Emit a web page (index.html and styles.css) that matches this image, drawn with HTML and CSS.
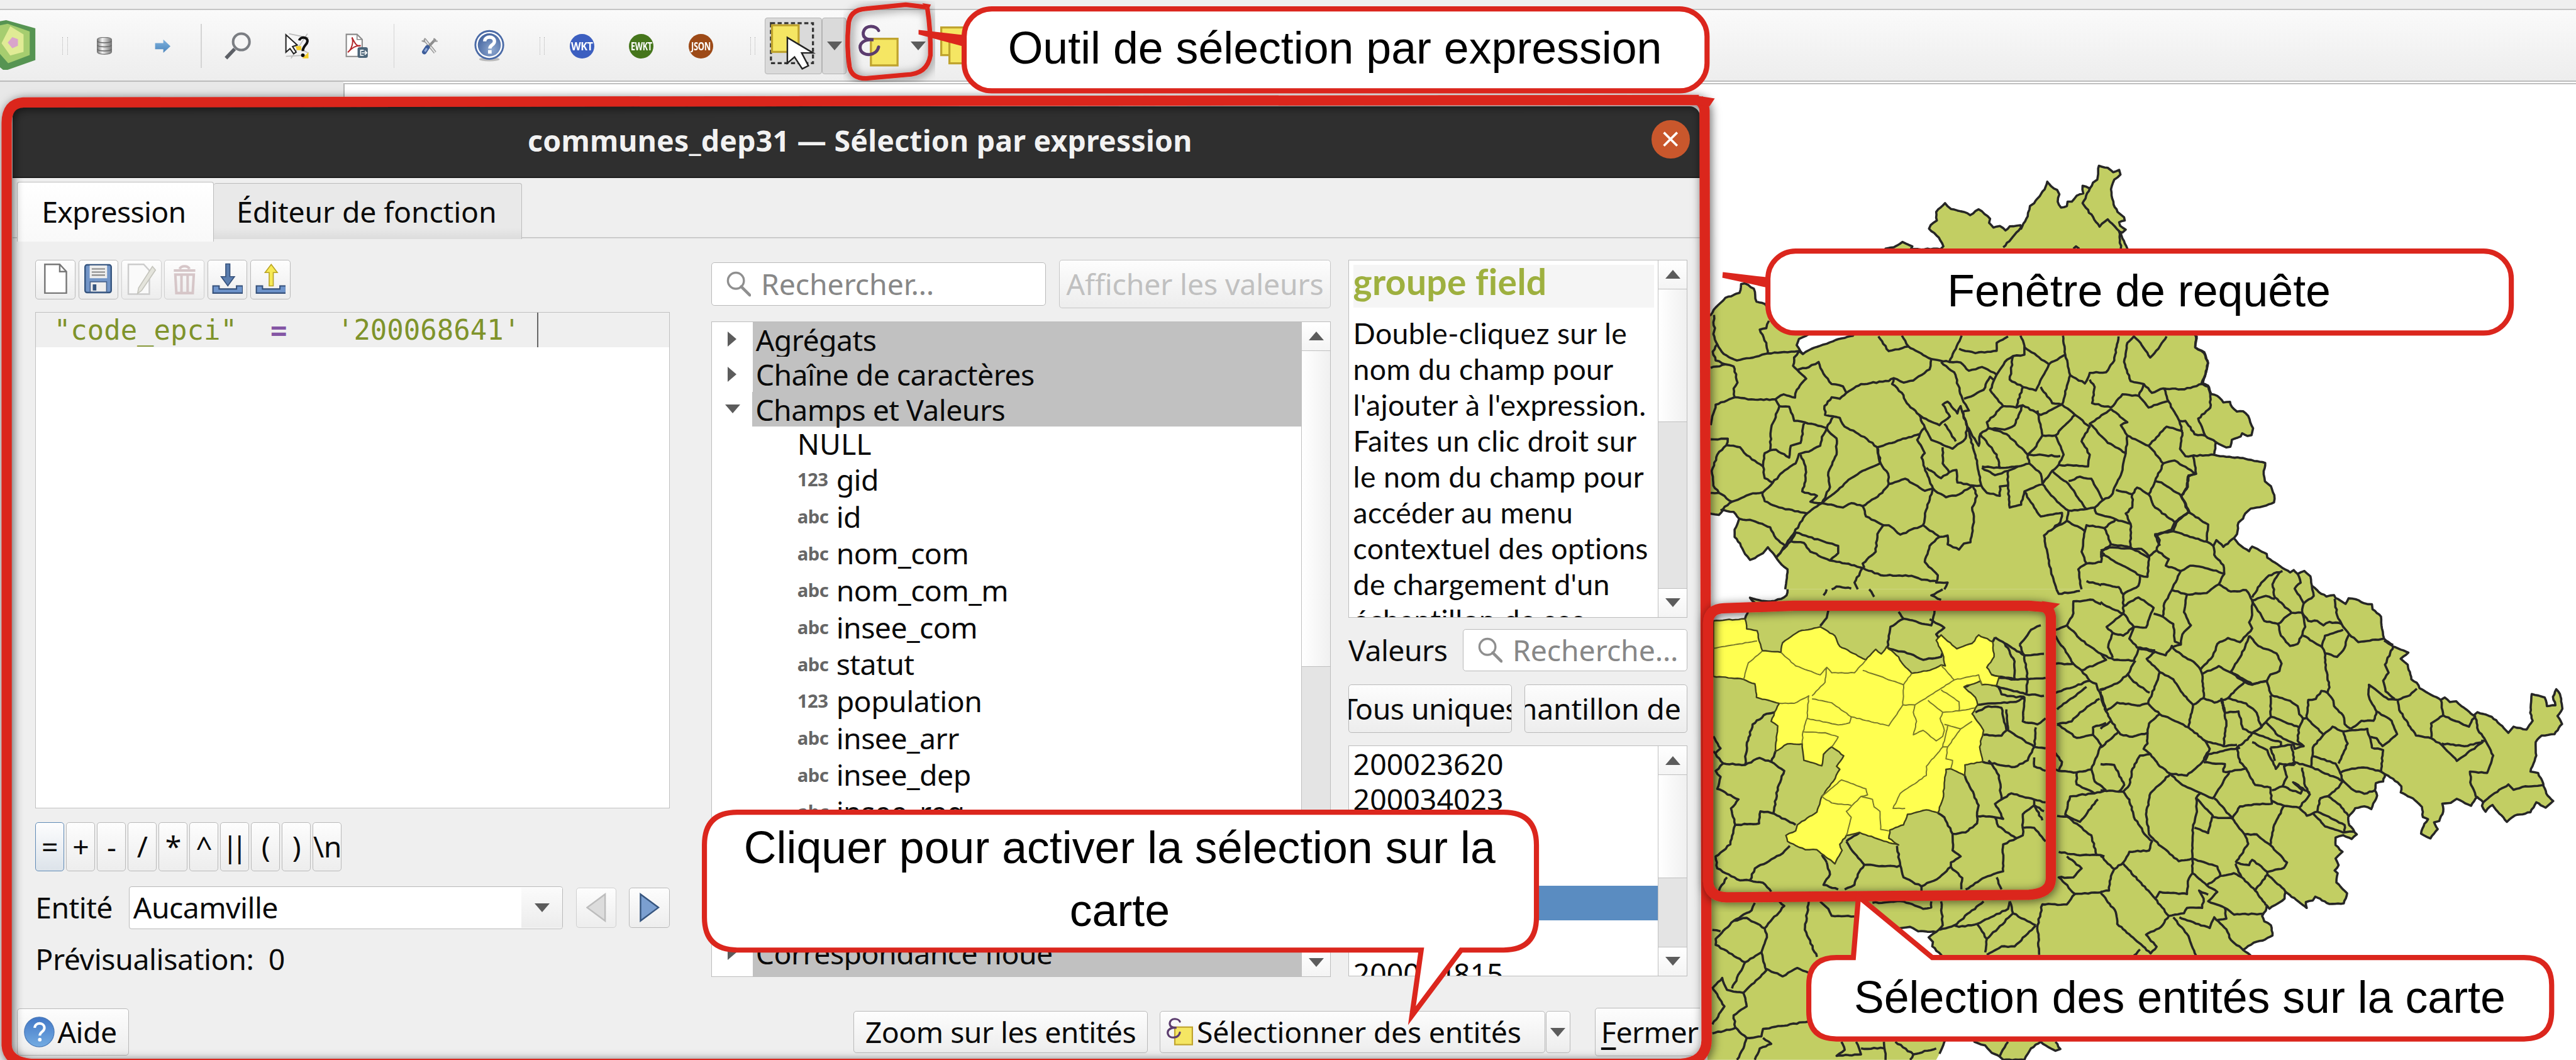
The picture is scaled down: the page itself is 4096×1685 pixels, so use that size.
FILE: index.html
```
<!DOCTYPE html>
<html lang="fr">
<head>
<meta charset="utf-8">
<title>Sélection par expression</title>
<link rel="stylesheet" href="styles.css">
</head>
<body>
<svg class="defs" aria-hidden="true">
  <defs>
    <linearGradient id="steel" x1="0" x2="1"><stop offset="0" stop-color="#777"/><stop offset=".35" stop-color="#f4f4f4"/><stop offset="1" stop-color="#777"/></linearGradient>
    <linearGradient id="sky" x1="0" y1="0" x2="0" y2="1"><stop offset="0" stop-color="#4277c6"/><stop offset="1" stop-color="#74ace2"/></linearGradient>
    <linearGradient id="arrowblue" x1="0" y1="0" x2="0" y2="1"><stop offset="0" stop-color="#7fb2de"/><stop offset="1" stop-color="#4c86bd"/></linearGradient>
    <radialGradient id="navy" cx=".6" cy=".7" r=".8"><stop offset="0" stop-color="#8fa9d0"/><stop offset="1" stop-color="#3b5c9a"/></radialGradient>
    <filter id="shade" x="-5%" y="-5%" width="110%" height="110%"><feDropShadow dx="3" dy="3" stdDeviation="9" flood-color="#000" flood-opacity=".6"/></filter>
    <symbol id="glass" viewBox="0 0 48 48"><circle cx="19" cy="18" r="15" fill="none" stroke="#8f8f8f" stroke-width="4"/><path d="M29 29 45 45" stroke="#8f8f8f" stroke-width="5.5" stroke-linecap="round"/></symbol>
    <symbol id="eps" viewBox="0 0 85 86"><rect x="28" y="29" width="52" height="52" fill="#f5e663" stroke="#bfa32e" stroke-width="4"/><path d="M43 13C40 4 17 -1 13 17c-1 11 8 14 20 14C16 29 3 38 8 51c5 13 31 12 35-6" fill="none" stroke="#5b3c6e" stroke-width="6" stroke-linecap="round"/></symbol>
  </defs>
</svg>
<div class="desktop">
  <div class="menubar"></div>
  <div class="toolbar">
    <svg class="t-logo" width="72" height="100" viewBox="0 0 72 100"><path d="M0 2 12 0 69 16V78L15 97H6L0 92Z" fill="#569452"/><path d="M0 10 15 7 58 22V68L16 84 0 66Z" fill="#a6cd6f"/><path d="M3 45 20 12 46 28V62L20 69Z" fill="#e0eb95"/><path d="M15 44 24 33 35 37V50L24 55Z" fill="#d9a4cb"/></svg>
    <i class="grip m50"></i>
    <svg class="m56" width="32" height="34" viewBox="0 0 32 34"><path d="M2 5c0-6 28-6 28 0v24c0 6-28 6-28 0Z" fill="url(#steel)" stroke="#777" stroke-width="1.5"/><path d="M2 8c4 4 24 4 28 0M2 16c4 4 24 4 28 0M2 24c4 4 24 4 28 0" fill="none" stroke="#666" stroke-width="2"/></svg>
    <svg class="m81" width="34" height="28" viewBox="0 0 34 28"><path d="M2 8H18V1L32 14 18 27V20H2Z" fill="url(#arrowblue)"/></svg>
    <i class="sep m57"></i>
    <svg class="m43" width="54" height="54" viewBox="0 0 54 54"><circle cx="34" cy="19" r="16" fill="#f6f6f6" stroke="#7b7e83" stroke-width="5"/><path d="M21 33 4 51" stroke="#5d6066" stroke-width="7"/></svg>
    <svg class="m65" width="50" height="52" viewBox="0 0 50 52"><path d="M8 2 46 10M44 2 12 50M2 46 40 44M10 20 46 40" stroke="#bbb" stroke-width="2" fill="none"/><path d="M20 26H32V34H24ZM34 50 46 38V50Z" fill="#f5cf2c"/><path d="M2 4V38L10 31 17 41 22 38 15 27 24 24Z" fill="#fff" stroke="#222" stroke-width="2.5"/><path d="M28 15c2-8 17-7 16 2-1 7-9 9-9 19" fill="none" stroke="#111" stroke-width="5"/><circle cx="35" cy="44" r="3.5"/></svg>
    <svg class="m68" width="46" height="50" viewBox="0 0 46 50"><path d="M2 2H23L33 12V45H2Z" fill="#fff" stroke="#8a8a8a" stroke-width="2.5"/><path d="M23 2V12H33" fill="none" stroke="#8a8a8a" stroke-width="2"/><path d="M5 37C12 32 17 17 13 8c6 12 10 19 17 16-10-1-17 4-25 13Z" fill="none" stroke="#b3282c" stroke-width="2.5"/><rect x="24" y="27" width="20" height="21" rx="4" fill="#4b6478"/><path d="M36 33H30V43H36M32 38H41M38 34 42 38 38 42" fill="none" stroke="#fff" stroke-width="2"/></svg>
    <i class="sep m48"></i>
    <svg class="m51" width="34" height="34" viewBox="0 0 34 34"><path d="M7 4 28 30" stroke="#8d8d8d" stroke-width="6"/><path d="M7 4 28 30" stroke="#e4e4e4" stroke-width="3"/><path d="M29 4 13 21" stroke="#8d8d8d" stroke-width="5"/><path d="M13 20 7 29" stroke="#3d5d9a" stroke-width="9" stroke-linecap="round"/><path d="M12 22 8 28" stroke="#8fa9d8" stroke-width="4"/><path d="M26 2V8H33M2 7 7 9 8 2" fill="none" stroke="#999" stroke-width="2.5"/></svg>
    <svg class="m68" width="64" height="64" viewBox="0 0 64 64"><ellipse cx="32" cy="58" rx="20" ry="4" fill="#bbb"/><circle cx="32" cy="30" r="29" fill="#4a6aa6"/><circle cx="32" cy="30" r="25.5" fill="#fff"/><circle cx="32" cy="30" r="22.5" fill="url(#navy)"/><path d="M23 23c0-11 19-11 19 0 0 7-9 7-9 14" fill="none" stroke="#fff" stroke-width="6.5"/><rect x="29.5" y="40" width="7" height="7" fill="#fff"/></svg>
    <i class="grip m66"></i>
    <span class="badge wkt m49"><span>WKT</span></span><span class="badge ewkt m68"><span>EWKT</span></span><span class="badge json m68"><span>JSON</span></span>
    <i class="grip m73"></i>
    <span class="tbtn m18"><svg width="100" height="100" viewBox="0 0 100 100"><rect x="6" y="6" width="82" height="78" fill="none" stroke="#333" stroke-width="4" stroke-dasharray="8 5"/><rect x="8" y="10" width="52" height="52" fill="#f5e663" stroke="#bfa32e" stroke-width="4"/><path d="M38 34V84L52 72 67 95 79 89 66 64H88Z" fill="#fff" stroke="#222" stroke-width="3"/></svg></span>
    <span class="tdrop"><i class="down"></i></span>
    <svg class="m19" width="85" height="86"><use href="#eps"/></svg>
    <i class="down m21"></i>
    <svg class="m28" width="80" height="76" viewBox="0 0 80 76"><rect x="2" y="2" width="50" height="54" fill="#f5e663" stroke="#bfa32e" stroke-width="4"/><rect x="18" y="18" width="50" height="54" fill="#f5e663" stroke="#bfa32e" stroke-width="4"/></svg>
  </div>
  <div class="workspace">
    <div class="dock"></div>
    <div class="canvas"></div>
  </div>
  <svg class="map" id="map" width="5028" height="2068" viewBox="0 0 5028 2068"></svg>

  <div class="dialog">
    <div class="titlebar"><span>communes_dep31 — Sélection par expression</span><i class="close"><svg width="30" height="30" viewBox="0 0 30 30"><path d="M2 2 28 28M28 2 2 28" stroke="#fff" stroke-width="4.5"/></svg></i></div>
    <div class="tabs"><span class="tab on">Expression</span><span class="tab">Éditeur de fonction</span></div>
    <div class="columns">
      <div class="left">
        <div class="tools">
          <span class="btn"><svg width="60" height="66" viewBox="0 0 60 66"><path d="M9 4H38L51 18V60H9Z" fill="#fff" stroke="#777" stroke-width="3"/><path d="M38 4V18H51" fill="none" stroke="#777" stroke-width="3"/></svg></span>
          <span class="btn"><svg width="60" height="66" viewBox="0 0 60 66"><rect x="4" y="5" width="51" height="54" rx="4" fill="#7396c8" stroke="#36557f" stroke-width="3"/><rect x="13" y="6" width="34" height="25" fill="#eee"/><path d="M17 13H43M17 19H43M17 25H43" stroke="#888" stroke-width="2.5"/><rect x="14" y="38" width="32" height="20" fill="#eee" stroke="#46628c" stroke-width="2"/><rect x="19" y="43" width="7" height="12" fill="#36557f"/></svg></span>
          <span class="btn dim"><svg width="60" height="66" viewBox="0 0 60 66"><path d="M5 4H35L46 16V62H5Z" fill="#fafafa" stroke="#ccc" stroke-width="3"/><path d="M25 50 52 8 58 15 31 55 23 61Z" fill="#e4e4dc" stroke="#c4c4bc" stroke-width="2"/></svg></span>
          <span class="btn dim"><svg width="60" height="66" viewBox="0 0 60 66"><path d="M9 16H51M21 13C22 6 38 6 39 13" fill="none" stroke="#d6c6c8" stroke-width="5"/><path d="M12 24H48L46 60H14ZM24 24V60M36 24V60" fill="none" stroke="#d6c6c8" stroke-width="5"/></svg></span>
          <span class="btn"><svg width="60" height="66" viewBox="0 0 60 66"><path d="M27 3H35V28H44L31 46 18 28H27Z" fill="#5a7dae" stroke="#35507a" stroke-width="2"/><path d="M2 46H14V52H48V46H60V60H2Z" fill="#6f95cc" stroke="#35507a" stroke-width="2.5"/></svg></span>
          <span class="btn"><svg width="60" height="66" viewBox="0 0 60 66"><path d="M27 46H35V20H43L31 4 19 20H27Z" fill="#f7ea55" stroke="#b9a426" stroke-width="2"/><path d="M2 46H14V52H48V46H60V60H2Z" fill="#6f95cc" stroke="#35507a" stroke-width="2.5"/></svg></span>
        </div>
        <div class="editor"><div class="codeline"><pre>"code_epci"  <b>=</b>   '200068641' </pre><i class="caret"></i></div></div>
        <div class="ops"><span class="btn hot">=</span><span class="btn">+</span><span class="btn">-</span><span class="btn">/</span><span class="btn">*</span><span class="btn">^</span><span class="btn bars">||</span><span class="btn">(</span><span class="btn">)</span><span class="btn">\n</span></div>
        <div class="entity"><label>Entité</label><span class="combo"><span>Aucamville</span><i class="cell"><i class="down"></i></i></span>
          <span class="btn nav dim"><svg width="40" height="58" viewBox="0 0 40 58"><path d="M37 3V55L2 29Z" fill="#dcdcdc" stroke="#bdbdbd" stroke-width="3"/></svg></span><span class="btn nav"><svg width="40" height="58" viewBox="0 0 40 58"><path d="M3 3V55L38 29Z" fill="#7b9fd0" stroke="#36557f" stroke-width="3"/></svg></span></div>
        <div class="preview">Prévisualisation: <span>0</span></div>
      </div>
      <div class="middle">
        <div class="searchrow"><span class="field"><svg width="50" height="50"><use href="#glass"/></svg>Rechercher…</span><span class="btn off">Afficher les valeurs</span></div>
        <div class="list tree">
          <div class="rows">
            <div class="group"><i class="right"></i><span>Agrégats</span></div>
            <div class="group"><i class="right"></i><span>Chaîne de caractères</span></div>
            <div class="group"><i class="down"></i><span>Champs et Valeurs</span></div>
            <div class="item null">NULL</div>
            <div class="item"><b>123</b>gid</div>
            <div class="item"><b>abc</b>id</div>
            <div class="item"><b>abc</b>nom_com</div>
            <div class="item"><b>abc</b>nom_com_m</div>
            <div class="item"><b>abc</b>insee_com</div>
            <div class="item"><b>abc</b>statut</div>
            <div class="item"><b>123</b>population</div>
            <div class="item"><b>abc</b>insee_arr</div>
            <div class="item"><b>abc</b>insee_dep</div>
            <div class="item"><b>abc</b>insee_reg</div>
            <div class="spacer"></div>
            <div class="group"><i class="right"></i><span>Correspondance floue</span></div>
            <div class="group next"><span></span></div>
          </div>
          <div class="scroll"><i class="end"><i class="up"></i></i><i class="thumb t1"></i><i class="groove"></i><i class="end"><i class="down"></i></i></div>
        </div>
      </div>
      <div class="right-col">
        <div class="list doc">
          <div class="text"><h3>groupe field</h3><p>Double-cliquez sur le<br>nom du champ pour<br>l'ajouter à l'expression.<br>Faites un clic droit sur<br>le nom du champ pour<br>accéder au menu<br>contextuel des options<br>de chargement d'un<br>échantillon de ses</p></div>
          <div class="scroll"><i class="end"><i class="up"></i></i><i class="thumb t2"></i><i class="groove"></i><i class="end"><i class="down"></i></i></div>
        </div>
        <div class="values"><label>Valeurs</label><span class="field"><svg width="50" height="50"><use href="#glass"/></svg>Recherche…</span></div>
        <div class="pair"><span class="btn"><span>Tous uniques</span></span><span class="btn end-cut"><span>hantillon de</span></span></div>
        <div class="list vals">
          <div class="rows"><div>200023620</div><div>200034023</div><div></div><div></div><div class="sel"></div><div></div><div>200054815</div></div>
          <div class="scroll"><i class="end"><i class="up"></i></i><i class="thumb t3"></i><i class="groove"></i><i class="end"><i class="down"></i></i></div>
        </div>
      </div>
    </div>
    <div class="footer">
      <span class="btn help"><svg width="60" height="60" viewBox="0 0 60 60"><circle cx="30" cy="30" r="29" fill="url(#sky)" stroke="#4a7ab8" stroke-width="1.5"/><path d="M21 22c1-12 19-11 19 0 0 8-9 7-9 15" fill="none" stroke="#fff" stroke-width="5"/><circle cx="31" cy="45" r="3.5" fill="#fff"/></svg>Aide</span>
      <span class="btn zoomb">Zoom sur les entités</span>
      <span class="btn selb"><svg width="56" height="57"><use href="#eps"/></svg>Sélectionner des entités</span>
      <span class="btn more"><i class="down"></i></span>
      <span class="btn closeb"><u>F</u>ermer</span>
    </div>
  </div>

  <svg class="frames" width="5028" height="2068" viewBox="0 0 5028 2068">
    <g fill="none" stroke="#db261d" stroke-linejoin="round">
      <path filter="url(#shade)" stroke-width="20" d="M3316 195 1800 197 45 200Q13 202 13 240V2040Q15 2072 60 2076H3280Q3330 2072 3331 2030L3327 215Q3327 205 3316 195"/>
      <path filter="url(#shade)" stroke-width="9" d="M1808 14 1768 9 1690 17Q1657 19 1656 50 1652 90 1658 130 1662 153 1690 153L1768 146Q1810 145 1816 108 1817 60 1810 16"/>
      <path filter="url(#shade)" stroke-width="20" d="M3995 1185 3960 1182H3500L3365 1187Q3335 1188 3334 1215V1720Q3336 1750 3370 1751L3960 1746Q4002 1744 4003 1715V1205Q4002 1190 3990 1185"/>
    </g>
    <path fill="#db261d" d="M3300 185 3347 192 3337 207 3310 205ZM1800 6 1817 9 1812 20ZM3985 1173 4021 1178 4003 1192Z"/>
  </svg>

  <div class="callout c1"><svg><path class="spike" d="M-84 46 2 56V78L-84 55Z"/><rect x="5" y="5" width="1450" height="160" rx="54"/></svg><p>Outil de sélection par expression</p></div>
  <div class="callout c2"><svg><path class="spike" d="M-83 46 2 56V76L-84 57Z"/><rect x="5" y="5" width="1451" height="160" rx="54"/></svg><p>Fenêtre de requête</p></div>
  <div class="callout c3"><svg><path d="M69 5H1565Q1629 5 1629 69V210Q1629 274 1565 274H1482L1386 402 1404 274H69Q5 274 5 210V69Q5 5 69 5Z"/></svg><p>Cliquer pour activer la sélection sur la<br>carte</p></div>
  <div class="callout c4"><svg><path d="M59 5H92L102 -114 246 5H1401Q1455 5 1455 59V110Q1455 164 1401 164H59Q5 164 5 110V59Q5 5 59 5Z"/></svg><p>Sélection des entités sur la carte</p></div>
</div>
<script src="map.js"></script>
</body>
</html>
```
FILE: styles.css
```
* { box-sizing: border-box; }
html, body { margin: 0; padding: 0; overflow: hidden; background: #fff; }
.defs { position: absolute; width: 0; height: 0; }
.desktop {
  zoom: .81464; position: relative; width: 5028px; height: 2070px; overflow: hidden;
  display: flex; flex-direction: column;
  font: 57px/1.2 "Noto Sans", sans-serif; letter-spacing: -.7px; color: #0a0a0a; white-space: nowrap;
}
.menubar { height: 20px; background: #efefef; border-bottom: 3px solid #c4c4c4; flex: none; }
.toolbar { height: 140px; flex: none; display: flex; align-items: center; padding-top: 2px; background: linear-gradient(#fafafa, #ededed); border-bottom: 3px solid #bcbcbc; }
.toolbar > * { flex: none; }
.m18 { margin-left: 18px; } .m19 { margin-left: 19px; } .m21 { margin-left: 21px; } .m28 { margin-left: 28px; }
.m43 { margin-left: 43px; } .m48 { margin-left: 48px; } .m49 { margin-left: 49px; } .m50 { margin-left: 50px; }
.m51 { margin-left: 51px; } .m56 { margin-left: 56px; } .m57 { margin-left: 57px; } .m65 { margin-left: 65px; }
.m66 { margin-left: 66px; } .m68 { margin-left: 68px; } .m73 { margin-left: 73px; } .m81 { margin-left: 81px; }
.grip { width: 10px; height: 34px; border-left: 2px dotted #b5b5b5; border-right: 2px dotted #b5b5b5; }
.sep { width: 2px; height: 86px; background: #d4d4d4; }
.badge { width: 48px; height: 48px; border-radius: 50%; color: #fff; font: bold 21px/48px "Open Sans", sans-serif; letter-spacing: -.5px; display: flex; justify-content: center; }
.badge span { transform: scaleX(.95); }
.wkt { background: #3c5fc0; } .ewkt { background: #46761c; } .json { background: #9d4a17; }
.ewkt span { transform: scaleX(.74); } .json span { transform: scaleX(.76); }
.tbtn, .tdrop { height: 110px; border: 2px solid #b4b4b4; border-radius: 5px; background: #dadada; display: flex; align-items: center; justify-content: center; }
.tbtn { width: 112px; } .tdrop { width: 48px; }
.down, .up, .right { display: block; width: 0; height: 0; border: 15px solid transparent; flex: none; }
.down { border-top: 18px solid #5c5c5c; border-bottom: 0; }
.up { border-bottom: 18px solid #5c5c5c; border-top: 0; }
.right { border-left: 18px solid #5c5c5c; border-right: 0; }
.workspace { flex: 1; display: flex; }
.dock { width: 670px; background: #e8e8e8; }
.canvas { flex: 1; background: #fff; border-top: 3px solid #c0c0c0; border-left: 3px solid #b5b5b5; margin-top: 2px; }
.map { position: absolute; left: 0; top: 0; }
.frames { position: absolute; left: 0; top: 0; }

.dialog { position: absolute; left: 24px; top: 207px; width: 3294px; height: 1861px; background: #efefef; border-radius: 20px 20px 0 0; overflow: hidden; display: flex; flex-direction: column; }
.titlebar { height: 141px; flex: none; background: #2f2f2f; border-bottom: 3px solid #1d1d1d; color: #f2f2f2; font-weight: bold; letter-spacing: .25px; display: flex; align-items: center; padding: 0 20px 3px 1006px; justify-content: space-between; }
.close { width: 74px; height: 74px; border-radius: 50%; background: #c9572c; display: flex; align-items: center; justify-content: center; margin-top: -6px; }
.tabs { height: 119px; flex: none; display: flex; align-items: flex-end; padding-left: 9px; background: linear-gradient(#c4c4c4, #c4c4c4) 0 115px / 100% 2px no-repeat; }
.tab { height: 109px; width: 602px; background: linear-gradient(#e9e9e9 80%, #dcdcdc); border: 2px solid #bcbcbc; border-bottom: 0; border-left: 0; border-radius: 5px 5px 0 0; display: flex; align-items: center; justify-content: center; letter-spacing: -.2px; padding: 2px 4px 0 0; }
.tab.on { width: 384px; height: 116px; background: linear-gradient(#fff, #f9f9f9); border-left: 2px solid #bcbcbc; margin-bottom: -4px; letter-spacing: -.9px; padding: 0 6px 0 0; }
.tabs .tab:last-child { margin-bottom: 1px; }
.columns { display: flex; margin: 40px 0 0 45px; height: 1400px; }
.left { width: 1238px; display: flex; flex-direction: column; }
.middle { width: 1210px; margin-left: 81px; display: flex; flex-direction: column; }
.right-col { width: 662px; margin-left: 34px; display: flex; flex-direction: column; }
.btn { border: 2px solid #b9b9b9; border-radius: 6px; background: linear-gradient(#fdfdfd, #ededed); display: flex; align-items: center; justify-content: center; flex: none; overflow: hidden; }
.btn.dim { border-color: #cfcfcf; }
.btn.off { color: #c0c0c0; border-color: #c6c6c6; width: 531px; height: 95px; letter-spacing: -.2px; }
.tools { display: flex; gap: 6px; height: 77px; }
.tools .btn { width: 78px; }
.editor { margin-top: 25px; height: 971px; background: #fff; border: 2px solid #c0c0c0; }
.codeline { height: 68px; background: #efefef; display: flex; align-items: center; padding-left: 35px; }
.codeline pre { margin: 0; font: 54px/68px "DejaVu Sans Mono", monospace; letter-spacing: 0; color: #7f932b; }
.codeline b { font-weight: bold; color: #8456a4; }
.caret { width: 2px; height: 68px; background: #666; margin-left: 1px; }
.ops { margin-top: 26px; display: flex; gap: 4px; }
.ops .btn { width: 56.2px; height: 96px; }
.ops .hot { border-color: #5f8ab6; background: linear-gradient(#fdfdfe, #dce3ea); }
.ops .bars { letter-spacing: -13px; padding-right: 13px; }
.entity { margin-top: 30px; height: 83px; display: flex; align-items: center; }
.entity label { width: 183px; }
.combo { width: 848px; height: 83px; border: 2px solid #b9b9b9; border-radius: 5px; background: #fff; display: flex; align-items: center; justify-content: space-between; padding-left: 7px; }
.cell { width: 80px; height: 79px; background: linear-gradient(#fbfbfb, #ececec); display: flex; align-items: center; justify-content: center; }
.nav { width: 79px; height: 78px; margin-left: 25px; }
.preview { margin-top: 24px; line-height: 70px; letter-spacing: -.5px; }
.preview span { margin-left: 14px; }
.searchrow { display: flex; align-items: center; justify-content: space-between; height: 95px; }
.field { background: #fff; border: 2px solid #b9b9b9; border-radius: 6px; display: flex; align-items: center; color: #878787; overflow: hidden; letter-spacing: -.1px; }
.searchrow .field { width: 654px; height: 84px; padding-left: 27px; gap: 19px; }
.list { background: #fff; border: 2px solid #bdbdbd; display: flex; overflow: hidden; }
.scroll { width: 57px; flex: none; border-left: 2px solid #c0c0c0; display: flex; flex-direction: column; }
.end { height: 55px; flex: none; background: linear-gradient(#fff, #f4f4f4); display: flex; align-items: center; justify-content: center; }
.thumb { background: linear-gradient(90deg, #fff, #f0f0f0); border: solid #c0c0c0; border-width: 2px 0; }
.t1 { height: 618px; } .t2 { height: 260px; } .t3 { height: 203px; }
.groove { flex: 1; background: #e4e4e4; border-bottom: 2px solid #c0c0c0; }
.tree { margin-top: 25px; height: 1280px; }
.rows { flex: 1; overflow: hidden; }
.tree .rows { display: flex; flex-direction: column; }
.group { height: 68px; flex: none; display: flex; align-items: center; padding-left: 31px; }
.group .right { width: 18px; margin-right: 31px; }
.group .down { margin-left: -5px; margin-right: 24px; }
.group span { flex: 1; height: 68px; line-height: 69px; padding-left: 6px; background: #c1c1c1; }
.group.next { padding-left: 80px; }
.item { height: 72px; flex: none; display: flex; align-items: center; padding-left: 167px; padding-top: 1px; }
.item.null { height: 68px; letter-spacing: 0; }
.item b { width: 76px; font-size: 36px; color: #666; letter-spacing: -.6px; }
.spacer { height: 205px; margin-top: 0; flex: none; }
.doc { height: 698px; flex: none; }
.doc .text { flex: 1; padding: 8px 7px 0 8px; overflow: hidden; font-family: Lato, sans-serif; letter-spacing: .4px; }
.doc h3 { margin: 0 0 15px; height: 84px; line-height: 66px; font-size: 70px; color: #9eb03f; background: #f5f5f5; }
.doc p { margin: 0; font-size: 57px; line-height: 70px; }
.values { margin-top: 23px; height: 82px; flex: none; display: flex; align-items: center; justify-content: space-between; }
.values .field { width: 439px; height: 82px; padding-left: 27px; gap: 19px; }
.pair { margin-top: 26px; display: flex; justify-content: space-between; }
.pair .btn { width: 319px; height: 94px; }
.end-cut.btn { justify-content: flex-end; padding-right: 12px; letter-spacing: -.3px; }
.vals { margin-top: 25px; height: 450px; flex: none; letter-spacing: 0; }
.vals .rows div { height: 68px; line-height: 70px; padding-left: 8px; }
.vals .rows .sel { background: #5a8cc1; }
.footer { display: flex; align-items: center; height: 96px; margin: 59px 0 0 9px; }
.help { width: 219px; height: 92px; gap: 5px; padding-right: 10px; }
.zoomb { width: 574px; height: 82px; margin-left: 1414px; }
.selb { width: 752px; height: 82px; margin-left: 24px; gap: 5px; justify-content: flex-start; padding-left: 10px; letter-spacing: -.3px; }
.more { width: 48px; height: 82px; margin-left: 1px; }
.closeb { width: 240px; height: 94px; margin-left: 48px; justify-content: flex-start; padding-left: 11px; }
.closeb u { text-underline-offset: 8px; text-decoration-thickness: 5px; }

.callout { position: absolute; display: flex; align-items: center; justify-content: center; }
.callout svg { position: absolute; left: 0; top: 0; width: 100%; height: 100%; overflow: visible; fill: #fff; stroke: #db261d; stroke-width: 10px; stroke-miterlimit: 12; }
.callout .spike { fill: #db261d; stroke: none; }
.callout p { position: relative; margin: 0; padding: 0 3px 6px 0; font: 88px/123px "Liberation Sans", Arial, sans-serif; letter-spacing: 0; text-align: center; color: #000; }
.c1 { left: 1877px; top: 12px; width: 1460px; height: 170px; }
.c2 { left: 3446px; top: 485px; width: 1461px; height: 170px; }
.c3 { left: 1370px; top: 1580px; width: 1634px; height: 279px; }
.c4 { left: 3526px; top: 1864px; width: 1460px; height: 169px; }
.c3 p { padding-bottom: 9px; }
```
FILE: map.js
```
// Commune map. Each sheet has its own origin and scale; lines are "x,y x,y ..." separated by ";".
const sheets = [
  {
    at: [3320, 250], scale: [1000 / 1568, 900 / 1568],
    edge: "20,640 30,635 45,610 75,577 118,560 123,530 135,528 162,546 170,590 196,598 208,612 240,640 330,700 300,717 293,738 312,768 330,755 365,740 395,728 430,715 465,706 500,600 540,450 565,410 590,405 617,387 647,402 643,410 675,413 712,410 733,412 742,402 728,372 698,342 703,330 722,314 720,285 747,255 765,275 805,285 824,296 850,276 868,292 885,308 882,322 895,338 915,333 932,348 945,334 978,330 980,342 1000,300 1007,265 1020,255 1052,208 1060,182 1072,198 1090,210 1097,225 1092,250 1102,270 1120,265 1122,250 1135,250 1150,230 1170,222 1168,196 1190,205 1200,185 1213,175 1218,128 1245,135 1262,150 1280,142 1284,158 1265,175 1255,208 1263,260 1275,285 1295,303 1297,314 1280,320 1283,332 1300,345 1290,355 1280,352 1290,375 1305,410 1400,560 1515,708 1513,745 1540,765 1552,800 1535,870 1555,880 1562,905",
    close: "1568,905 1568,1568",
    edge2: "258,1568 265,1500 240,1475 230,1460 205,1425 190,1445 165,1462 150,1468 135,1448 120,1412 103,1390 103,1365 112,1345 117,1328 100,1305 68,1298 55,1315 20,1308",
    lines: "40,635 38,660 43,680 38,700 50,735 70,768 110,790 160,780 205,766 265,762 300,758 312,768;205,766 200,730 180,685 200,680 208,655;50,735 36,760 45,790 75,803 100,810 112,865 100,885 103,915 45,940 30,1010;30,815 75,803;103,915 165,923 228,922 253,905 288,916 293,890 322,852 295,822 282,808 285,780 300,758;295,822 330,813 360,795 375,835 400,870 435,878 445,900;228,922 240,945 215,1020 212,1095 230,1093 270,1120 275,1080 305,1070 317,1000 285,995 270,947 237,945;317,1000 350,1008 385,1020 370,1050 365,1080 330,1100 300,1108 290,1140 250,1170 220,1205 195,1190 190,1150 195,1105 212,1095;30,1058 82,1056 78,1078 50,1110 33,1165 38,1215 55,1240 95,1270 60,1300;78,1078 120,1085 140,1112 190,1150;95,1270 150,1245 190,1238 220,1205;30,1240 55,1240;188,1238 195,1268 240,1290 325,1310;305,1110 320,1150 320,1200 310,1235 355,1250 335,1270 370,1275;117,1328 160,1335 212,1357 230,1395 258,1420;230,1460 258,1420 300,1350 325,1310 370,1275 395,1220 390,1170 415,1110 415,1055 390,1030 385,1020;385,1020 405,980 380,975 378,945 400,915 425,920 445,900 490,870 575,860 590,850 620,865 650,858 700,820 705,785 635,742 615,705;635,742 575,758 543,708;705,785 760,795 798,705;405,980 425,985 440,1015 500,1050 540,1085 610,1060 670,1040 685,1018 668,975 630,935 615,900 585,870 590,850;540,1085 548,1140 495,1165 460,1190 370,1275;540,1085 550,1140 573,1175 575,1210 625,1192 685,1233 710,1225 685,1155 675,1120 685,1105 662,1060 670,1040;575,1210 555,1240 495,1285 505,1320 558,1350 540,1380 535,1440 495,1480 500,1495;370,1275 435,1290 460,1275 495,1285;710,1225 693,1280 680,1350 730,1390 700,1420 685,1475 725,1520 720,1545 755,1545 745,1568;558,1350 575,1350 610,1382 680,1350;230,1460 275,1405 315,1410 335,1440 395,1470 425,1475 495,1495;275,1405 290,1375 330,1390 420,1420 420,1445 395,1470;495,1495 550,1520 645,1522 675,1535 720,1540;495,1495 470,1545 480,1568;400,1568 415,1558 460,1565;730,1390 755,1385 755,1415 790,1433 805,1412 825,1408 835,1330 830,1290 845,1250 832,1215 790,1245 750,1255 725,1240 710,1225;690,1155 735,1190 760,1170 740,1140 740,1085;685,1018 705,1060 770,1090 810,1055 815,1015 795,945 785,970 755,930 740,940 762,980 730,1010 680,985 668,975;745,1005 780,1065;735,795 775,830 800,920 820,960 800,965 815,1015 845,1130 858,1215 832,1215;760,1170 782,1162 785,1205 832,1215;760,795 795,797 820,825 860,812 905,838 885,890 925,945 965,950 985,880 945,855 955,775 930,795 905,838;815,1015 850,1080 855,1040 905,1110 915,1155 860,1150;805,920 835,908 865,890 885,845 895,855;790,750 840,765 905,757 905,730 940,708;955,775 990,770 990,740 978,705;990,745 1065,803 1035,870 1025,892 985,880;1065,803 1115,770 1108,705;1115,770 1130,840 1105,940 1075,935 1040,880;1130,840 1175,868 1190,832 1240,830 1265,790 1278,708;1190,855 1205,880 1197,935 1255,950 1290,905 1340,910 1355,870 1315,860 1295,795 1305,730 1325,708 1345,730 1375,780 1400,750 1425,708;1355,870 1380,900 1415,885 1480,888 1535,870;1340,910 1370,950 1430,928;1475,1030 1425,1015 1370,1080 1305,1045 1285,1010 1305,1000 1255,955;1255,955 1190,1005 1245,1070 1300,1105 1305,1045;1105,940 1145,975 1190,1015 1165,1065 1190,1110 1185,1150 1095,1145 1110,1110 1085,1045 1145,975;965,950 985,942 1040,975 1105,940;925,945 875,1000 880,1020 930,1025 960,1010 985,942;1030,960 1045,1045 1085,1045;1045,1045 1020,1090 1000,1110 935,1040 880,1020 855,1040;1000,1110 1005,1140 970,1150 915,1155;1000,1110 1100,1115;858,1215 875,1240 915,1250 915,1218 940,1215 945,1290 980,1280 990,1235 1045,1210 1040,1175 1005,1140;860,1155 900,1180 940,1165 970,1150;940,1165 940,1215;990,1235 1020,1290 1040,1320 1105,1308 1100,1340 1050,1385 1065,1480 1088,1568;1045,1210 1090,1270 1125,1300 1180,1295 1125,1210 1075,1165 1045,1210;1075,1165 1095,1145;1125,1200 1160,1185 1195,1192 1230,1265 1205,1290 1180,1295;1125,1300 1120,1335 1175,1370 1180,1350 1235,1360 1270,1330 1210,1310 1205,1290;1120,1335 1080,1360;1230,1265 1255,1250 1285,1180 1300,1105;1270,1230 1320,1245 1335,1222 1370,1245 1390,1290 1450,1340 1440,1365 1390,1385 1405,1420;1320,1245 1320,1290 1300,1310 1315,1345 1315,1425 1255,1415 1235,1360;1270,1330 1315,1345;1370,1080 1415,1140 1390,1200 1370,1245;1415,1140 1450,1130 1515,1175 1490,1185 1490,1220 1470,1250 1410,1205 1390,1200;1470,1250 1495,1305 1450,1340;1175,1370 1165,1440 1180,1480 1155,1500 1165,1568;1180,1480 1225,1475 1225,1440 1255,1415;1315,1425 1370,1460;1225,1440 1235,1450;1180,1540 1225,1555;978,340 925,405;1190,205 1168,255 1220,335 1245,310 1280,350 1285,410;1140,410 1148,402 1158,410"
  },
  {
    at: [4100, 500], scale: [928 / 1568, 900 / 1568],
    edge: "317,270 312,310 342,326 354,360 348,395 333,432 355,440 362,468 385,475 405,497 427,495 433,512 450,528 470,527 487,543 503,585 498,608 485,611 467,602 462,613 433,624 428,648 415,650 380,632 375,675 415,682 470,686 543,703 538,730 542,765 562,782 573,812 572,837 545,848 495,858 477,875 470,892 455,905 450,945 440,958 455,978 490,1003 500,987 548,1012 550,1025 600,1060 625,1075 637,1067 650,1080 672,1070 692,1088 697,1120 720,1142 745,1157 770,1152 775,1162 808,1182 818,1163 852,1170 870,1180 895,1183 897,1200 925,1225 928,1265 935,1300 965,1322",
    close: "965,1568 0,1568 0,270",
    lines: "362,468 362,515 322,552 345,610 380,632;210,450 225,495 260,560 280,560 310,605 345,610;260,560 270,600 262,655 280,680 375,675;305,680 315,740 290,745 285,790 265,815 290,870 355,912 350,970 240,935 250,905 290,870;350,970 372,985 382,965 405,988 440,958;372,985 375,1015 405,1050 408,1080 390,1115 350,1145 285,1150 235,1135 265,1070 295,1052 345,1060 408,1078;390,1115 430,1140 480,1135 500,1170 500,1220 490,1245 500,1265 480,1290 460,1312 420,1298 385,1318 370,1360 330,1405;500,1160 530,1110 555,1085 600,1070;590,1075 567,1115 575,1160 630,1212 665,1212 670,1180 640,1130 660,1110 650,1080;500,1170 545,1155 575,1165;500,1170 540,1240 585,1250 630,1212;585,1250 595,1290 625,1325 650,1318 675,1260 665,1212;670,1180 703,1155 697,1120;665,1212 685,1240 715,1240 735,1255 755,1243 795,1250 780,1220 772,1165;795,1250 820,1285 850,1312 935,1300;668,1290 730,1328 740,1290 800,1270;730,1328 740,1350 780,1362 800,1340 820,1285;490,1290 520,1325 580,1350 597,1385 590,1410 560,1422 548,1445 500,1455 430,1412 465,1355 490,1290;0,1115 60,1125 75,1150 75,1215 20,1190 0,1175;75,1150 125,1120 130,1085 10,1015 0,1025;130,1085 155,1090 160,1020 135,995 30,990 0,1000;160,1020 185,1000 195,965 180,945 240,935;185,1000 225,1030 215,1052 265,1070;75,1190 125,1160 175,1195 150,1262 110,1260 75,1215 20,1260 40,1280 75,1290 110,1260;235,1135 210,1180 205,1225 240,1250 245,1310 265,1320 270,1285 298,1255 275,1210 285,1150;175,1215 205,1225;110,1260 95,1300 120,1330 180,1340;40,1280 25,1330 40,1365;265,1320 235,1330"
  },
  {
    at: [4100, 1250], scale: [928 / 1568, 818 / 1568],
    edge: "935,0 965,22 1015,45 990,68 1013,90 1025,145 1043,158 1052,178 1122,222 1135,213 1152,230 1173,227 1190,245 1230,280 1243,268 1290,285 1325,320 1345,345 1362,322 1405,333 1425,300 1417,270 1422,200 1465,213 1472,245 1500,242 1492,210 1503,182 1515,200 1523,255 1507,282 1522,312 1497,350 1455,355 1435,380 1437,430 1418,490 1443,495 1460,535 1470,572 1493,600 1468,625 1437,605 1418,642 1365,655 1340,678 1310,640 1293,615 1285,620 1270,640 1258,618 1262,605 1242,585 1222,618 1175,592 1155,607 1127,610 1130,640 1117,675 1100,680 1112,705 1088,740 1057,722 1068,685 1080,668 1063,660 1060,622 1030,590 990,568 992,545 965,517 938,500 932,527 908,533 905,560 912,580 893,630 870,620 840,627 817,660 820,690 845,725 828,742 800,728 775,737 775,765 798,790 775,815 785,840 772,860 782,870 778,905 813,945 802,983 755,985 708,958 700,972 677,978 680,1000 610,940 607,965 557,1003 548,990 545,1010 533,1030 540,1050 562,1065 567,1103 535,1122 505,1130 470,1157 495,1178",
    close: "540,1230 0,1230 0,0",
    lines: "740,45 742,100 755,175 748,195 728,188 710,218 685,222 680,290;748,195 768,225 770,245 800,280 805,312 825,330;548,150 560,195 565,205 625,225 650,245 655,275 668,292 680,290 735,352 700,400 695,470;560,205 562,285 655,325 668,292;562,285 545,305 585,355 630,380 670,395 640,405 635,385;655,325 650,375 670,395;430,120 390,95 335,125 340,215 375,232 420,215 475,155 430,120;475,155 500,165 548,150;420,215 480,235 515,270 530,325 500,345 470,330 455,265 410,270 398,215;398,215 410,270 415,310 405,395 345,375 290,325 305,240 340,215;305,240 265,190 240,145 195,118 152,68 180,42 215,55 235,20 250,40 312,85 330,110 335,125;195,118 185,155 157,235 195,275 255,305 290,325;90,125 110,155 162,195;115,75 90,125 55,160 0,185;0,50 45,72 110,75 125,30 180,42;157,235 130,243 55,232 18,265 35,300 65,350 105,360 155,345 160,310 195,275;0,190 18,265;35,300 0,330;60,340 0,400;155,345 155,385 142,405 165,425 195,470 230,498 285,505 335,455 360,405 345,375;165,425 130,430 105,480 95,540 75,565 95,595 110,660 150,730 170,750 160,785 95,790 75,830 45,855;0,560 60,565 78,540 45,465 0,462;60,565 75,565;230,498 165,570 150,650 160,725 200,770 258,825 303,815 305,700 318,640 315,590 330,570 270,540 230,498;330,570 370,590 400,540 425,490 405,490 410,462 340,455;425,490 480,478 510,540 560,550 565,610 515,612 460,620 435,665 375,590;315,590 370,655 355,720 310,700;370,660 435,665 475,725 487,760 465,800 445,830;465,885 440,870 395,880 385,845 303,815;475,725 515,725 560,765 570,700 605,618 565,600;560,765 580,790 615,830 605,850 550,865 500,820 490,840 445,830;445,835 465,885 510,935 550,875 550,865;550,875 605,930 610,940;510,935 545,990;605,618 655,625 680,655 715,640 725,590 750,582 785,550 800,525 700,475 640,455 605,470 615,510 600,545 565,560;600,545 660,572 665,560 635,530 690,570;655,625 690,575 675,545 665,475;480,478 460,455 450,400 485,370 500,345;345,450 355,425 460,400;405,395 450,390;500,380 550,410 578,480 590,460 640,465;560,400 595,395 630,390 640,465;560,400 575,450;500,345 560,370 595,380 595,395;530,325 545,305;700,432 775,460 790,495 800,525;735,352 765,322 800,340 815,385 785,460;800,340 880,330 895,400 932,410 925,490 870,475 820,482 790,495;800,525 835,560 870,573 905,560;925,490 938,500;750,582 790,615 817,655;715,640 770,670 805,690 805,718;700,645 740,695 800,718 835,715;825,330 860,300 900,300 910,265 885,210 885,165 950,220 980,222 1020,205 1043,180;910,265 960,300 978,350 930,395 910,365 890,360;965,22 938,90 950,120 932,150 940,190 970,218;980,222 985,260 1040,355 1090,365 1125,390 1175,450 1260,380 1200,395 1125,385;1090,365 1090,310 1130,280 1122,222;1130,280 1215,322 1235,280;1235,280 1245,335 1270,375 1295,430 1275,495 1218,490 1222,540 1242,590;1270,375 1255,375;1262,605 1300,570 1345,538 1362,558 1400,545 1462,540;0,805 45,855 30,900 28,935 0,940;75,835 180,965 225,1030 200,1070 150,1100 185,1145 165,1170 55,1060 50,1015 0,940;130,1155 110,1178;180,965 195,940 285,948 288,900 303,870 303,815;303,870 350,915 395,880;350,915 385,940 355,975 410,1000 440,1025 535,1022;225,1030 275,1020 285,1000 335,1000 340,965 325,935 355,950;240,1035 290,1105 315,1178;260,1035 360,1075 375,1035 415,1080 430,1120 470,1157;410,1000 415,1040 385,1045"
  },
  {
    at: [3320, 1150], scale: [1000 / 1568, 918 / 1568],
    edge: "265,0 262,20 245,32 215,40 185,38 150,28 165,45 145,70 135,98",
    close: "20,105 20,1568 720,1568",
    edge2: "730,1548 745,1508 800,1400 837,1508 870,1520 890,1545 915,1558 925,1568 990,1568 1010,1530 1040,1508 1055,1520 1085,1538 1100,1532 1085,1508",
    close2: "1100,1400 1250,1300 1250,0",
    lines: "365,122 385,95 390,70;605,75 620,98 705,120 715,70;620,98 580,125 570,195 640,215 680,235 735,225 740,210;700,100 745,128 720,150 735,170;900,160 930,180 990,220 1050,215;930,180 960,240 960,300 890,285;990,220 1000,300 960,300;1000,300 1055,295;975,185 1010,135 1040,120;975,185 990,220;893,175 900,160;912,295 960,300;910,325 995,350 1050,355;995,350 1000,300;847,385 900,380 965,375 990,360 985,440 1030,450 1055,430;805,325 855,305 910,325 920,350 965,360 990,358;840,410 880,390 920,395 935,470 920,488 865,485;935,400 940,470 1020,525 1025,460;1020,525 1055,530;862,575 960,592 1000,570 1020,525;1020,560 1020,590 1055,605;880,570 912,620 920,700 950,680 1055,710;808,622 850,720 845,755 900,760;920,700 900,715 925,765 900,760 910,790 965,830 985,820 985,795 1020,795 1055,840;985,795 985,750 1020,720 1050,740;1020,700 1020,720 1045,770;725,745 745,760 770,815 810,810 845,780 845,755;770,815 770,870 795,890 765,910 765,925 800,962 797,1000;765,925 730,960 675,990 620,960 610,920 600,855;675,990 675,1005;445,840 470,880 500,918 600,925 610,920;445,840 485,812;500,918 480,950 470,985 440,1000;385,910 395,950 375,985 420,1000;385,910 370,885;272,855 250,880 165,930 150,970 190,978 215,1008;290,785 215,745 182,740 178,780 105,785 90,850 45,890 50,930 120,970 150,970;105,785 92,730 115,700 50,665 60,625 45,605 68,580 38,540;38,490 60,530 45,545;68,580 135,585 180,562 215,575 255,605 235,660 222,745;135,585 140,520 158,450 200,415 225,410;215,575 228,540;965,830 925,850 925,940 870,960 810,1000;905,960 920,1000;80,960 55,1005;1085,135 1120,120 1140,80 1140,40 1200,35 1225,50;1120,120 1165,170 1225,215 1240,235 1165,270 1140,248 1085,248;1085,155 1140,248;1165,270 1190,305 1085,345;1190,305 1210,315 1240,405;1220,365 1160,410 1135,440 1090,450;1180,325 1090,400;1220,335 1240,330;1090,450 1150,495 1200,485 1200,460 1240,445;1200,485 1225,520 1195,600 1150,610 1095,605 1085,600;1085,545 1105,575 1095,605;1195,600 1205,640 1240,670;1150,610 1150,650 1205,680 1240,670;1205,680 1130,690 1115,750 1160,775 1215,700;1090,755 1120,757 1195,820 1210,885 1150,885 1095,875;1120,890 1165,930 1140,960 1095,960 1145,1015 1225,1010;1210,885 1235,890;1145,1015 1120,1050 1045,1050 1030,1120 1035,1218;945,1040 955,1080 1025,1120;955,1080 875,1165 870,1210;1025,1120 960,1190 920,1190 875,1218;845,1115 940,1065 945,1040;845,1115 860,1140 875,1165;845,1115 790,1125 775,1120 865,1040;735,1040 740,1120 720,1142;775,1120 730,1135;525,1045 620,1040 680,1065 705,1060 705,1040;330,1040 318,1135 355,1225;365,1040 390,1065 400,1088 470,1090;240,1040 255,1055 195,1130 140,1095 100,1105 45,1165 45,1185 135,1243 185,1210 202,1160 195,1130;100,1105 155,1070 165,1045;35,1135 60,1140;185,1210 200,1270 130,1345 80,1335 65,1295 35,1330;135,1243 95,1330;200,1265 250,1290 295,1262 330,1278;130,1345 140,1390 100,1420 105,1460 140,1495 185,1490 190,1465 330,1440;35,1325 72,1390 35,1450;35,1480 105,1462;140,1495 130,1530 110,1568;190,1495 215,1515 180,1530 165,1568;430,1508 440,1535 415,1555 490,1550 475,1508;560,1508 565,1568;595,1508 650,1550 720,1530;940,1508 915,1555;490,1530 560,1530;650,1550 640,1568;385,0 375,20;515,0 530,25;740,0 705,20 735,35;1088,0 1095,15 1160,5",
    hole: "590,1120 605,1130 640,1125 665,1140 720,1142 697,1160 710,1175 708,1190 735,1218 745,1235 680,1225",
    selected: "38,105 135,98 140,132 172,138 178,172 188,205 245,210 250,178 300,140 365,125 410,155 425,190 505,235 535,200 552,215 568,192 605,225 615,245 645,280 700,270 735,252 748,255 740,215 720,170 735,152 783,198 830,180 850,152 893,175 897,225 875,260 890,285 913,290 905,320 860,318 855,305 805,325 840,360 847,385 830,415 865,470 853,525 862,575 808,585 808,622 765,598 750,600 740,700 725,745 690,735 632,750 620,785 578,802 575,830 605,852 550,835 485,810 445,820 425,850 432,870 410,915 355,868 320,868 265,840 260,820 290,805 295,785 355,742 370,690 405,640 425,600 415,590 437,555 400,525 375,550 370,588 315,570 310,515 265,515 228,540 235,455 215,440 225,410 240,380 170,360 165,315 130,300 38,290",
    thin: "38,197 172,172;188,205 145,245 130,300;245,210 290,255 365,285 385,260 380,310 340,355;385,260 400,278 470,278 505,235;495,270 620,318 645,280;620,318 618,385 575,455 460,425 455,445 420,452 325,430;340,365 400,378 460,425;240,380 285,380 330,355 325,430 312,475 310,515;312,475 380,478 420,492 400,525;618,385 655,385 735,330 775,302 850,285 860,318;735,252 775,302;655,385 650,410 660,440 650,485 680,470 720,505 740,490 745,470 732,430 740,410 695,370;735,335 790,375 790,405 840,395;740,410 790,405;745,450 795,465 830,440;755,455 740,525 755,525 795,465;740,525 690,590 690,620 610,680 588,730 625,730;755,525 750,565 770,570 765,598;370,690 430,635 505,665 510,685 490,690 445,740 460,760 445,820;370,690 400,712 460,720;490,690 525,700 530,725 548,740 550,800 575,805"
  }
];

const parse = s => s ? s.trim().split(" ").map(p => p.split(",").map(Number)) : [];

// Roughens a polyline; the offset depends only on the point, so fill and outline agree.
function rough(points, amount) {
  const out = [];
  points.forEach((p, i) => {
    if (i) {
      const q = points[i - 1];
      const dx = p[0] - q[0], dy = p[1] - q[1], len = Math.hypot(dx, dy);
      const n = Math.floor(len / 9);
      for (let k = 1; k < n; k++) {
        const x = q[0] + dx * k / n, y = q[1] + dy * k / n;
        const r = Math.sin(x * 12.9898 + y * 78.233) * 43758.5453;
        const o = (r - Math.floor(r) - .5) * 2 * amount;
        out.push([x - dy / len * o, y + dx / len * o]);
      }
    }
    out.push(p);
  });
  return out;
}

const svg = document.getElementById("map");
function draw(sheet, points, cls, closed) {
  const path = document.createElementNS("http://www.w3.org/2000/svg", "path");
  path.setAttribute("class", cls);
  path.setAttribute("d", "M" + points.map(p =>
    (sheet.at[0] + p[0] * sheet.scale[0]).toFixed(1) + " " + (sheet.at[1] + p[1] * sheet.scale[1]).toFixed(1)).join("L") + (closed ? "Z" : ""));
  const look = {
    land: ["#c2ce63", "none", 0], water: ["#fff", "#262626", 4.4], chosen: ["#ffff50", "#3f3f1c", 3],
    line: ["none", "#262626", 4.4], thin: ["none", "#77772a", 2.4]
  }[cls];
  path.setAttribute("fill", look[0]);
  path.setAttribute("stroke", look[1]);
  path.setAttribute("stroke-width", look[2]);
  path.setAttribute("stroke-linejoin", "round");
  svg.appendChild(path);
}

for (const s of sheets) {
  const a = rough(parse(s.edge), 1.6), b = rough(parse(s.edge2), 1.6);
  draw(s, [...a, ...parse(s.close), ...b, ...parse(s.close2)], "land", true);
}
for (const s of sheets) {
  draw(s, rough(parse(s.edge), 1.6), "line");
  if (s.edge2) draw(s, rough(parse(s.edge2), 1.6), "line");
  s.lines.split(";").forEach(l => draw(s, rough(parse(l), 2), "line"));
  if (s.hole) draw(s, rough(parse(s.hole), 1.6), "water", true);
  if (s.selected) draw(s, rough(parse(s.selected), 1.6), "chosen", true);
  if (s.thin) s.thin.split(";").forEach(l => draw(s, rough(parse(l), 1.2), "thin"));
}
```
